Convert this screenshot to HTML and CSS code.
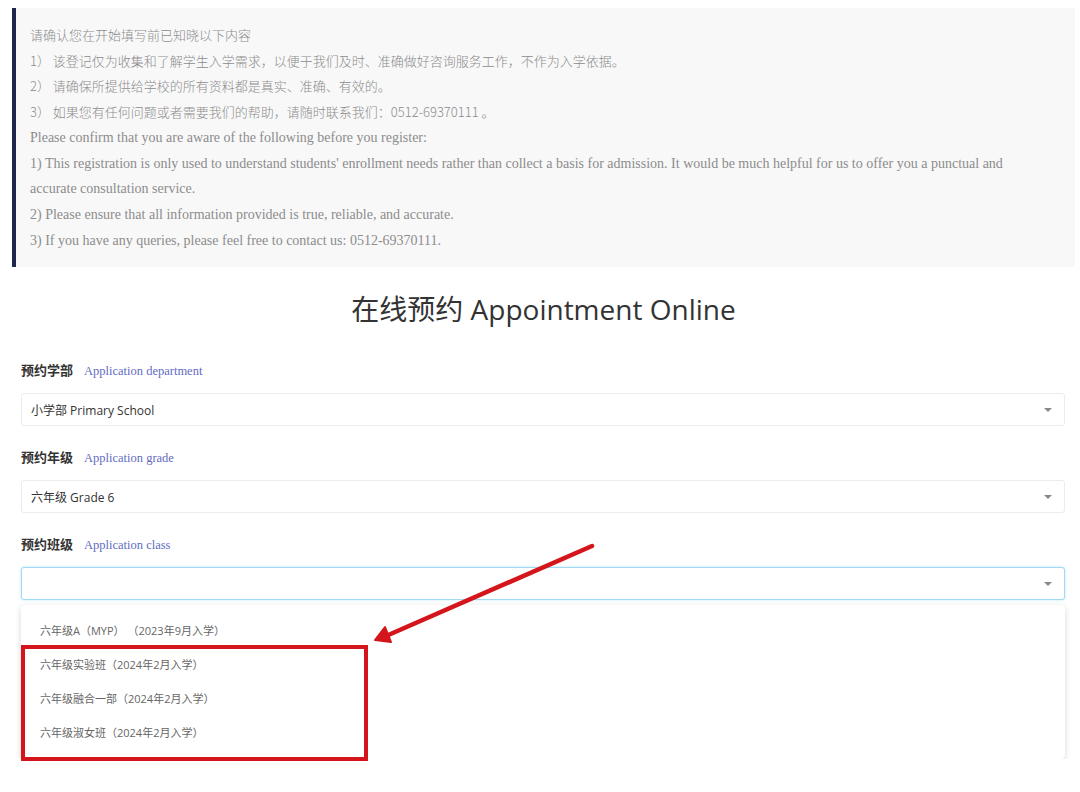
FILE: index.html
```html
<!DOCTYPE html>
<html lang="zh-CN">
<head>
    <meta charset="UTF-8">
    <meta name="viewport" content="width=device-width, initial-scale=1.0">
    <title>在线预约 Appointment Online</title>
    <link rel="stylesheet" href="styles.css">
</head>
<body>
    <div class="page">
        <div class="notice">
            <p class="cn">请确认您在开始填写前已知晓以下内容</p>
            <p class="cn">1） 该登记仅为收集和了解学生入学需求，以便于我们及时、准确做好咨询服务工作，不作为入学依据。</p>
            <p class="cn">2） 请确保所提供给学校的所有资料都是真实、准确、有效的。</p>
            <p class="cn">3） 如果您有任何问题或者需要我们的帮助，请随时联系我们：0512-69370111 。</p>
            <p class="en">Please confirm that you are aware of the following before you register:</p>
            <p class="en">1) This registration is only used to understand students' enrollment needs rather than collect a basis for admission. It would be much helpful for us to offer you a punctual and accurate consultation service.</p>
            <p class="en">2) Please ensure that all information provided is true, reliable, and accurate.</p>
            <p class="en">3) If you have any queries, please feel free to contact us: 0512-69370111.</p>
        </div>

        <h1 class="title">在线预约 Appointment Online</h1>

        <div class="form">
            <div class="field">
                <div class="label">预约学部<span class="label-en">Application department</span></div>
                <div class="select">
                    <span class="value">小学部 Primary School</span>
                    <span class="caret"></span>
                </div>
            </div>
            <div class="field">
                <div class="label">预约年级<span class="label-en">Application grade</span></div>
                <div class="select">
                    <span class="value">六年级 Grade 6</span>
                    <span class="caret"></span>
                </div>
            </div>
            <div class="field open">
                <div class="label">预约班级<span class="label-en">Application class</span></div>
                <div class="select focus">
                    <span class="value"></span>
                    <span class="caret"></span>
                </div>
                <ul class="dropdown">
                    <li>六年级A（MYP） （2023年9月入学）</li>
                    <li>六年级实验班（2024年2月入学）</li>
                    <li>六年级融合一部（2024年2月入学）</li>
                    <li>六年级淑女班（2024年2月入学）</li>
                </ul>
            </div>
        </div>
    </div>

    <!-- annotation drawn over the screenshot -->
    <div class="mark-box"></div>
    <svg class="mark-arrow" width="1080" height="792" viewBox="0 0 1080 792">
        <line x1="592" y1="546" x2="386" y2="636" stroke="#d4161c" stroke-width="4.5" stroke-linecap="round"/>
        <polygon points="375,640 385,627 391,642" fill="#d4161c" stroke="#d4161c" stroke-width="2" stroke-linejoin="round"/>
    </svg>
</body>
</html>
```

FILE: styles.css
```css
body {
    margin: 0;
    background: #fff;
    color: #333;
    font-family: "Open Sans", "Noto Sans CJK SC", sans-serif;
}
.page {
    width: 1063px;
    padding: 8px 0 0 12px;
}
.notice {
    background: #f8f8f8;
    border-left: 4px solid #1e2650;
    padding: 14px 40px 14px 14px;
    color: #8c8c8c;
    font-size: 13px;
    line-height: 25.7px;
}
.notice p {
    margin: 0;
}
.notice .cn {
    font-family: "Noto Sans CJK SC", sans-serif;
    font-weight: 300;
}
.notice .en {
    font-family: "Liberation Serif", "DejaVu Serif", serif;
    font-size: 14px;
}
.title {
    margin: 20px 0 0;
    text-align: center;
    font-size: 28px;
    font-weight: 400;
    line-height: 44px;
    color: #333;
    font-family: "Open Sans", "Noto Sans CJK SC", sans-serif;
}
.form {
    padding: 0 10px 0 9px;
    margin-top: 29px;
}
.field {
    padding-bottom: 21px;
}
.label {
    font-family: "Noto Sans CJK SC", sans-serif;
    font-size: 13px;
    font-weight: 700;
    line-height: 20px;
    color: #333;
}
.label-en {
    margin-left: 11px;
    font-family: "Liberation Serif", "DejaVu Serif", serif;
    font-size: 12.5px;
    font-weight: 400;
    color: #5f6cbf;
}
.select {
    margin-top: 12px;
    height: 33px;
    box-sizing: border-box;
    border: 1px solid #ececec;
    border-radius: 3px;
    background: #fff;
    display: flex;
    align-items: center;
    justify-content: space-between;
    padding: 0 12px 0 9px;
    font-size: 12px;
    font-family: "Open Sans", "Noto Sans CJK SC", sans-serif;
    color: #333;
}
.select.focus {
    border-color: #9fd9f4;
    box-shadow: 0 0 3px rgba(120, 200, 240, 0.45);
}
.caret {
    width: 0;
    height: 0;
    border-left: 4px solid transparent;
    border-right: 4px solid transparent;
    border-top: 4px solid #8a8a8a;
}
.field.open {
    padding-bottom: 0;
}
.dropdown {
    list-style: none;
    margin: 5px 0 0;
    padding: 9px 0 9px;
    background: #fff;
    border-radius: 4px;
    box-shadow: 0 2px 6px rgba(0, 0, 0, 0.16);
}
.dropdown li {
    height: 34px;
    line-height: 34px;
    padding-left: 19px;
    font-size: 11px;
    color: #666;
    font-family: "Open Sans", "Noto Sans CJK SC", sans-serif;
}

/* annotation */
.mark-box {
    position: absolute;
    left: 21px;
    top: 645px;
    width: 347px;
    height: 116px;
    box-sizing: border-box;
    border: 4.5px solid #d4161c;
}
.mark-arrow {
    position: absolute;
    left: 0;
    top: 0;
    pointer-events: none;
}
```
